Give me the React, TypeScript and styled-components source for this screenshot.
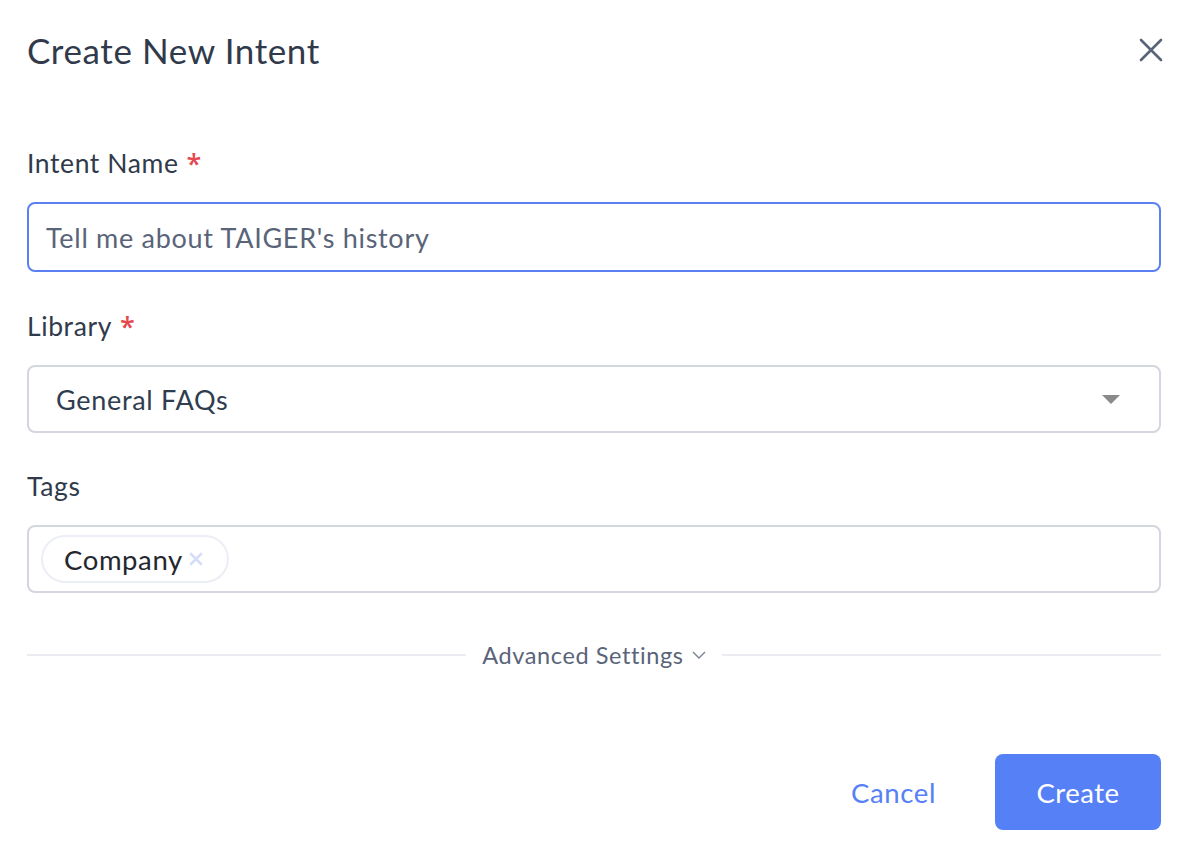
import React from "react";
import styled, { createGlobalStyle } from "styled-components";

const Global = createGlobalStyle`
  html, body { margin: 0; padding: 0; background: #ffffff; }
  body { font-family: "Lato", "Noto Sans", sans-serif; -webkit-font-smoothing: antialiased; }
  * { box-sizing: border-box; }
`;

const Dialog = styled.div`
  width: 1188px;
  height: 858px;
  padding: 0 27px;
  display: flex;
  flex-direction: column;
  background: #fff;
`;

const Header = styled.div`
  display: flex;
  align-items: center;
  justify-content: space-between;
  height: 100px;
`;

const Title = styled.h1`
  margin: 0;
  font-size: 35px;
  letter-spacing: 0.6px;
  font-weight: 400;
  color: #313a4b;
`;

const CloseButton = styled.button`
  border: none;
  background: none;
  padding: 0;
  width: 24px;
  height: 24px;
  margin-right: -2px;
  display: flex;
  align-items: center;
  justify-content: center;
  cursor: pointer;
`;

const Field = styled.div<{ $top: number }>`
  display: flex;
  flex-direction: column;
  margin-top: ${(p) => p.$top}px;
`;

const Label = styled.label`
  display: flex;
  align-items: flex-start;
  height: 30px;
  font-size: 26.5px;
  letter-spacing: 0.6px;
  color: #313a4b;
  line-height: 30px;
  margin-bottom: 24px;
`;

const Required = styled.span`
  font-family: "Open Sans", sans-serif;
  font-weight: 600;
  font-size: 27px;
  line-height: 30px;
  color: #e5484d;
  margin-left: 8px;
  margin-top: 1px;
`;

const Box = styled.div<{ $focused?: boolean; $pad: number }>`
  height: ${(p) => (p.$focused ? 70 : 68)}px;
  border: 2px solid ${(p) => (p.$focused ? "#5b80f3" : "#d3d6dc")};
  border-radius: 8px;
  display: flex;
  align-items: center;
  padding: 0 ${(p) => p.$pad}px;
  font-size: 27px;
  letter-spacing: 0.7px;
`;

const InputText = styled.span`
  color: #5a6479;
`;

const SelectText = styled.span`
  color: #2f3d4f;
  flex: 1;
`;

const Caret = styled.span`
  width: 0;
  height: 0;
  border-left: 9px solid transparent;
  border-right: 9px solid transparent;
  border-top: 9px solid #8a8a8a;
  margin-right: 12px;
`;

const Chip = styled.span`
  display: inline-flex;
  align-items: center;
  height: 48px;
  padding: 0 23px 0 21px;
  border: 2px solid #eceef5;
  border-radius: 24px;
  font-size: 27.5px;
  letter-spacing: 0.6px;
  color: #24272e;
  gap: 5px;
`;

const ChipX = styled.span`
  display: flex;
  align-items: center;
`;

const Divider = styled.div`
  display: flex;
  align-items: center;
  margin-top: 48px;
  gap: 16px;
`;

const Rule = styled.div`
  flex: 1;
  height: 2px;
  background: #ebecf1;
`;

const DividerLabel = styled.span`
  font-size: 23.5px;
  letter-spacing: 0.6px;
  color: #5a6479;
  display: flex;
  align-items: center;
  gap: 8px;
`;

const Footer = styled.div`
  display: flex;
  justify-content: flex-end;
  align-items: center;
  margin-top: 85px;
  gap: 59px;
`;

const TextButton = styled.button`
  border: none;
  background: none;
  font-family: inherit;
  font-size: 27.5px;
  letter-spacing: 0.6px;
  color: #5680f5;
  padding: 0;
  cursor: pointer;
`;

const PrimaryButton = styled.button`
  border: none;
  background: #5680f6;
  color: #fff;
  font-family: inherit;
  font-size: 27.5px;
  letter-spacing: 0.5px;
  width: 166px;
  height: 76px;
  border-radius: 8px;
  cursor: pointer;
`;

export default function App() {
  return (
    <>
      <Global />
      <Dialog>
        <Header>
          <Title>Create New Intent</Title>
          <CloseButton aria-label="Close">
            <svg width="24" height="24" viewBox="0 0 24 24">
              <path d="M2 2 L22 22 M22 2 L2 22" stroke="#5a6479" strokeWidth="2.6" strokeLinecap="round" />
            </svg>
          </CloseButton>
        </Header>
        <Field $top={48}>
          <Label>
            Intent Name<Required>*</Required>
          </Label>
          <Box $focused $pad={17}>
            <InputText>Tell me about TAIGER's history</InputText>
          </Box>
        </Field>
        <Field $top={39}>
          <Label>
            Library<Required>*</Required>
          </Label>
          <Box $pad={27}>
            <SelectText>General FAQs</SelectText>
            <Caret />
          </Box>
        </Field>
        <Field $top={38}>
          <Label>Tags</Label>
          <Box $pad={12}>
            <Chip>
              Company
              <ChipX>
                <svg width="16" height="16" viewBox="0 0 16 16">
                  <path d="M3 3 L13 13 M13 3 L3 13" stroke="#d5ddfa" strokeWidth="2.6" strokeLinecap="round" />
                </svg>
              </ChipX>
            </Chip>
          </Box>
        </Field>
        <Divider>
          <Rule />
          <DividerLabel>
            Advanced Settings
            <svg width="14" height="10" viewBox="0 0 14 10">
              <path d="M1 2 L7 8 L13 2" stroke="#7a8294" strokeWidth="1.4" fill="none" />
            </svg>
          </DividerLabel>
          <Rule />
        </Divider>
        <Footer>
          <TextButton>Cancel</TextButton>
          <PrimaryButton>Create</PrimaryButton>
        </Footer>
      </Dialog>
    </>
  );
}
